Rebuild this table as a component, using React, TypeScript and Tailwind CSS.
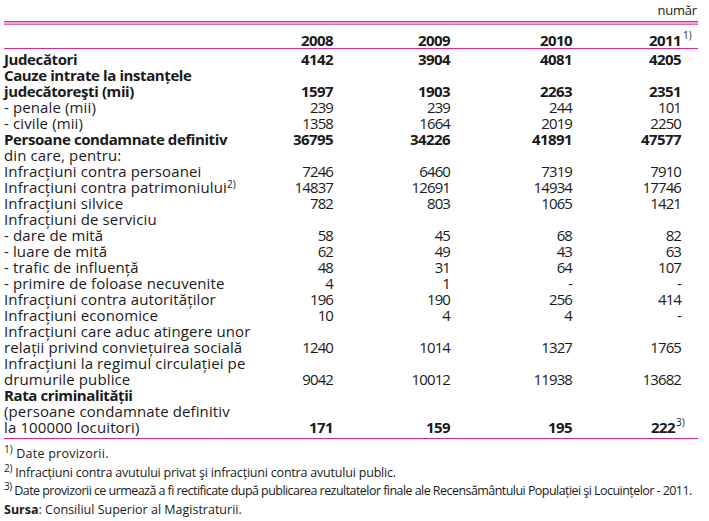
import React from "react";

type Row = {
  label: string;
  sup?: string;
  v?: string[];
  bold?: boolean;
  boldValues?: boolean;
  lastSup?: string;
};

const rows: Row[] = [
  { label: "Judecători", v: ["4142", "3904", "4081", "4205"], bold: true },
  { label: "Cauze intrate la instanțele", bold: true },
  { label: "judecătoreşti (mii)", v: ["1597", "1903", "2263", "2351"], bold: true },
  { label: "- penale (mii)", v: ["239", "239", "244", "101"] },
  { label: "- civile (mii)", v: ["1358", "1664", "2019", "2250"] },
  { label: "Persoane condamnate definitiv", v: ["36795", "34226", "41891", "47577"], bold: true },
  { label: "din care, pentru:" },
  { label: "Infracțiuni contra persoanei", v: ["7246", "6460", "7319", "7910"] },
  { label: "Infracțiuni contra patrimoniului", sup: "2)", v: ["14837", "12691", "14934", "17746"] },
  { label: "Infracțiuni silvice", v: ["782", "803", "1065", "1421"] },
  { label: "Infracțiuni de serviciu" },
  { label: "- dare de mită", v: ["58", "45", "68", "82"] },
  { label: "- luare de mită", v: ["62", "49", "43", "63"] },
  { label: "- trafic de influență", v: ["48", "31", "64", "107"] },
  { label: "- primire de foloase necuvenite", v: ["4", "1", "-", "-"] },
  { label: "Infracțiuni contra autorităților", v: ["196", "190", "256", "414"] },
  { label: "Infracțiuni economice", v: ["10", "4", "4", "-"] },
  { label: "Infracțiuni care aduc atingere unor" },
  { label: "relații privind conviețuirea socială", v: ["1240", "1014", "1327", "1765"] },
  { label: "Infracțiuni la regimul circulației pe" },
  { label: "drumurile publice", v: ["9042", "10012", "11938", "13682"] },
  { label: "Rata criminalității", bold: true },
  { label: "(persoane condamnate definitiv" },
  { label: "la 100000 locuitori)", v: ["171", "159", "195", "222"], boldValues: true, lastSup: "3)" },
];

const grid = "grid grid-cols-[249px_80px_117px_122px_109px] pr-[17px]";

export default function App() {
  return (
    <div className="w-[709px] h-[521px] bg-white pl-[4px] text-[#1a1a1a] font-['Open_Sans',sans-serif] overflow-hidden">
      <div className="w-[694px]">
        <div className="h-[21px] flex items-center justify-end pr-[1px] text-[13px] tracking-[-0.2px]">număr</div>
        <div className="h-[1px] bg-[#d8338c]" />
        <div className="h-[2px] bg-[#f3a3cd]" />
        <div className="h-[1px] bg-[#e56bab]" />
        <div className={`${grid} h-[23px] items-end text-[15px] leading-[16px] font-bold tracking-[-0.6px]`}>
          <div />
          <div className="text-right">2008</div>
          <div className="text-right">2009</div>
          <div className="text-right">2010</div>
          <div className="text-right relative">
            2011
            <span className="absolute left-full top-[-2px] pl-[2px] text-[10px] font-normal leading-[10px] tracking-normal">1)</span>
          </div>
        </div>
        <div className="h-[1px] bg-[#e0288c]" />
        <div className="pt-[2px] text-[15px] leading-[16px]">
          {rows.map((r, i) => (
            <div key={i} className={`${grid} h-[16px]`}>
              <div className={`whitespace-nowrap ${r.bold ? "font-bold tracking-[-0.4px]" : "tracking-[0.12px]"}`}>
                {r.label}
                {r.sup && <span className="text-[10px] relative top-[-5px] leading-none">{r.sup}</span>}
              </div>
              {(r.v ?? ["", "", "", ""]).map((x, j) => (
                <div
                  key={j}
                  className={`text-right ${r.bold || r.boldValues ? "font-bold tracking-[-0.6px]" : "tracking-[-0.9px]"}`}
                >
                  {j === 3 && r.lastSup ? (
                    <span className="relative mr-[6px]">
                      {x}
                      <span className="absolute left-full top-[0px] pl-[1px] text-[10px] font-normal leading-[10px] tracking-normal">
                        {r.lastSup}
                      </span>
                    </span>
                  ) : (
                    x
                  )}
                </div>
              ))}
            </div>
          ))}
        </div>
        <div className="mt-[3px] h-[1px] bg-[#e0288c]" />
        <div className="mt-[6px] text-[12.5px] leading-[17.5px]">
          <div className="whitespace-nowrap tracking-[0.25px]">
            <span className="text-[10px] relative top-[-5px] tracking-normal">1)</span> Date provizorii.
          </div>
          <div className="whitespace-nowrap tracking-[-0.2px]">
            <span className="text-[10px] relative top-[-5px]">2)</span> Infracțiuni contra avutului privat şi infracțiuni contra avutului public.
          </div>
          <div className="whitespace-nowrap tracking-[-0.55px]">
            <span className="text-[10px] relative top-[-5px]">3)</span> Date provizorii ce urmează a fi rectificate după publicarea rezultatelor finale ale Recensământului Populației şi Locuințelor - 2011.
          </div>
          <div className="whitespace-nowrap">
            <span className="font-bold">Sursa</span>: Consiliul Superior al Magistraturii.
          </div>
        </div>
      </div>
    </div>
  );
}
